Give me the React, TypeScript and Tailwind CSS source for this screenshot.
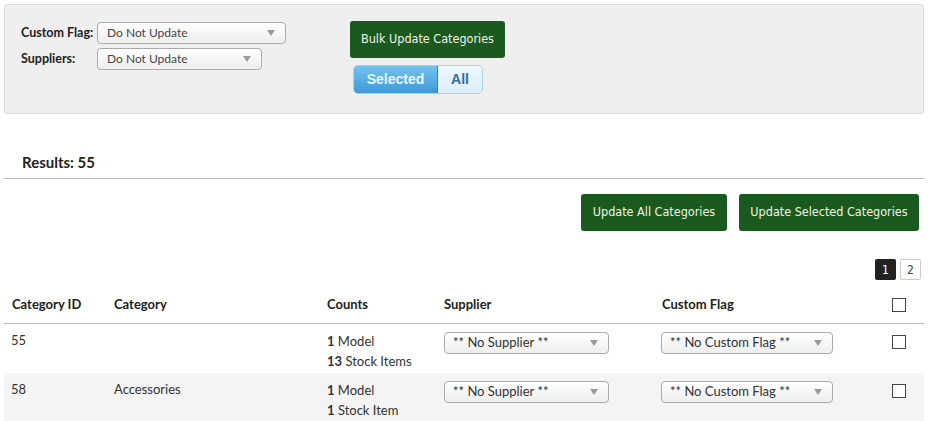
import React from "react";

const sans = { fontFamily: "Lato, 'Noto Sans', sans-serif" };

function Select({ label, w }: { label: string; w: string }) {
  return (
    <div
      className={`${w} h-[22px] flex items-center justify-between rounded-[4px] border border-[#aaa] bg-gradient-to-b from-white to-[#eeeeee] pl-[9px] pr-[10px] text-[12px] text-[#444] shadow-[inset_0_0_2px_#fff]`}
    >
      <span>{label}</span>
      <span className="w-0 h-0 border-l-[4px] border-r-[4px] border-t-[6px] border-l-transparent border-r-transparent border-t-[#999]" />
    </div>
  );
}

function Sel2({ label, w }: { label: string; w: string }) {
  return (
    <div
      className={`${w} h-[22px] flex items-center justify-between rounded-[4px] border border-[#aaa] bg-gradient-to-b from-white to-[#eeeeee] pl-[8px] pr-[10px] text-[13px] text-[#333]`}
    >
      <span>{label}</span>
      <span className="w-0 h-0 border-l-[4px] border-r-[4px] border-t-[6px] border-l-transparent border-r-transparent border-t-[#999]" />
    </div>
  );
}

function Check() {
  return <div className="w-[14px] h-[14px] border border-[#444] bg-white" />;
}

const btnFont = { fontFamily: "'DejaVu Sans Condensed', 'DejaVu Sans', sans-serif" };

export default function App() {
  return (
    <div className="w-[928px] h-[421px] bg-white text-[#222] overflow-hidden" style={sans}>
      <div className="px-[4px] pt-[4px]">
        <div className="h-[110px] rounded-[3px] border border-[#dcdcdc] bg-[#efefef] flex">
          <div className="pl-[16px] pt-[17px] flex flex-col gap-[4px]">
            <div className="flex items-center">
              <span className="w-[76px] text-[12.5px] font-bold text-[#222]">Custom Flag:</span>
              <Select label="Do Not Update" w="w-[189px]" />
            </div>
            <div className="flex items-center">
              <span className="w-[76px] text-[12.5px] font-bold text-[#222]">Suppliers:</span>
              <Select label="Do Not Update" w="w-[165px]" />
            </div>
          </div>
          <div className="ml-[64px] pt-[16px] flex flex-col">
            <div
              className="w-[155px] h-[37px] rounded-[3px] bg-[#1b5a1e] text-[#f3f3e6] text-[12.5px] flex items-center justify-center"
              style={btnFont}
            >
              Bulk Update Categories
            </div>
            <div
              className="ml-[3px] mt-[7px] flex h-[29px] w-[130px] rounded-[5px] border border-[#a9cfe8] overflow-hidden text-[14px] font-bold"
              style={{ fontFamily: "'Liberation Sans', Arial, sans-serif" }}
            >
              <div className="w-[84px] flex items-center justify-center bg-gradient-to-b from-[#73c2ee] to-[#3d9ad8] text-[#eaf6fd] border-r border-[#2d83c2]">
                Selected
              </div>
              <div className="flex-1 flex items-center justify-center bg-gradient-to-b from-[#eef7fd] to-[#dcedf9] text-[#2f6ea6]">
                All
              </div>
            </div>
          </div>
        </div>
      </div>

      <div className="mx-[4px] mt-[39px] border-b border-[#bbb] pl-[18px] pb-[7px] text-[15px] leading-[18px] font-bold text-[#222]">
        Results: 55
      </div>

      <div className="flex justify-end gap-[12px] pr-[9px] mt-[15px]" style={btnFont}>
        <div className="w-[146px] h-[37px] rounded-[3px] bg-[#1b5a1e] text-[#f3f3e6] text-[12.5px] flex items-center justify-center">
          Update All Categories
        </div>
        <div className="w-[180px] h-[37px] rounded-[3px] bg-[#1b5a1e] text-[#f3f3e6] text-[12.5px] flex items-center justify-center">
          Update Selected Categories
        </div>
      </div>

      <div className="flex justify-end gap-[4px] pr-[7px] mt-[28px] text-[12px]" style={btnFont}>
        <div className="w-[21px] h-[21px] rounded-[2px] bg-[#222] text-white flex items-center justify-center">1</div>
        <div className="w-[21px] h-[21px] rounded-[2px] border border-[#ccc] bg-white text-[#444] flex items-center justify-center">2</div>
      </div>

      <div className="mx-[4px] mt-[6px]">
        <div className="flex items-center h-[38px] border-b border-[#bbb] text-[13px] font-bold text-[#222]">
          <div className="w-[102px] pl-[8px]">Category ID</div>
          <div className="w-[213px] pl-[8px]">Category</div>
          <div className="w-[117px] pl-[8px]">Counts</div>
          <div className="w-[218px] pl-[8px]">Supplier</div>
          <div className="w-[218px] pl-[8px]">Custom Flag</div>
          <div className="pl-[20px]"><Check /></div>
        </div>
        {[
          { id: "55", cat: "", m: "1", s: "13", sl: "Stock Items", bg: "bg-white" },
          { id: "58", cat: "Accessories", m: "1", s: "1", sl: "Stock Item", bg: "bg-[#f4f4f4]" },
        ].map((r) => (
          <div key={r.id} className={`flex h-[49px] text-[13px] text-[#333] ${r.bg}`}>
            <div className="w-[102px] pl-[7px] pt-[7px]">{r.id}</div>
            <div className="w-[213px] pl-[8px] pt-[7px]">{r.cat}</div>
            <div className="w-[117px] pl-[8px] pt-[7px] leading-[20px]">
              <div><b>{r.m}</b> Model</div>
              <div><b>{r.s}</b> {r.sl}</div>
            </div>
            <div className="w-[218px] pl-[8px] pt-[8px]">
              <Sel2 label="** No Supplier **" w="w-[165px]" />
            </div>
            <div className="w-[218px] pl-[7px] pt-[8px]">
              <Sel2 label="** No Custom Flag **" w="w-[172px]" />
            </div>
            <div className="pl-[20px] pt-[11px]"><Check /></div>
          </div>
        ))}
      </div>
    </div>
  );
}
